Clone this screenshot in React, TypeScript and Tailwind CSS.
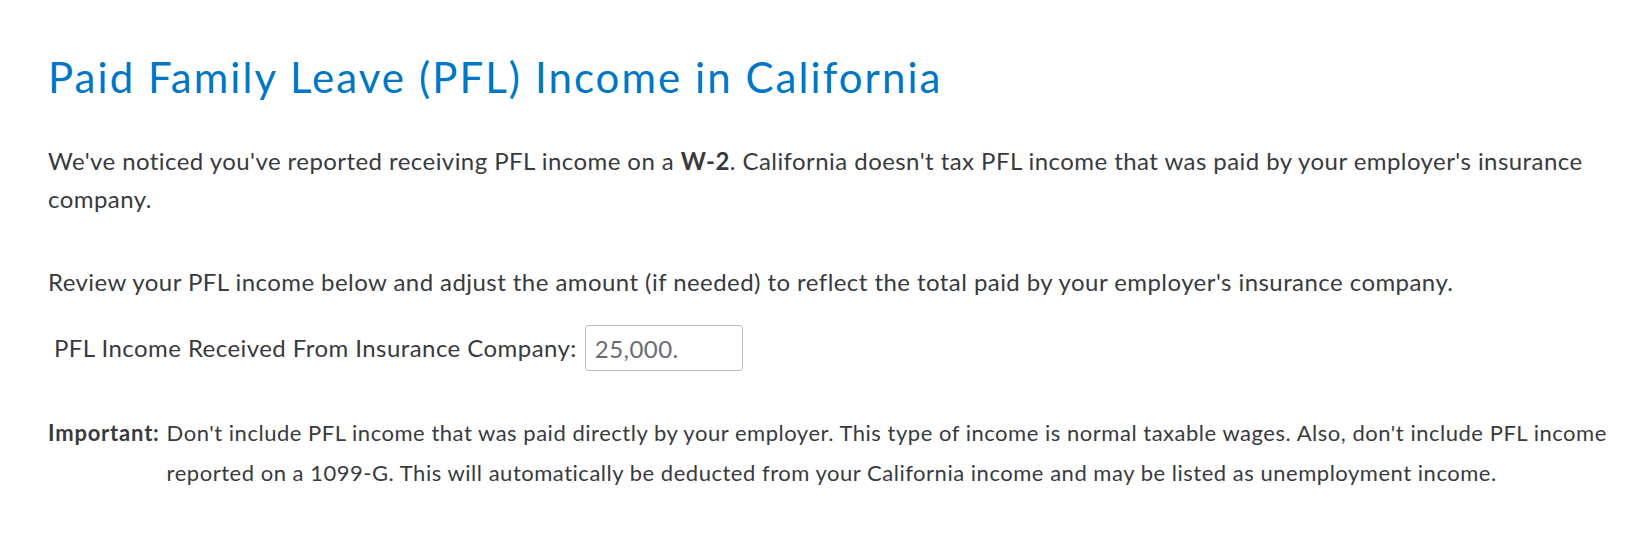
import React from "react";

const App: React.FC = () => {
  return (
    <div className="min-h-screen bg-white pl-[48px] pr-[30px] pt-[47px] text-[#393a3d] font-['Lato',sans-serif]">
      <h1 className="text-[42px] leading-[60px] font-normal tracking-[2.05px] text-[#0077c5]">
        Paid Family Leave (PFL) Income in California
      </h1>
      <p className="mt-[35px] text-[24px] leading-[38px] tracking-[0.44px]">
        We've noticed you've reported receiving PFL income on a <b className="font-bold">W-2</b>.
        California doesn't tax PFL income that was paid by your employer's
        insurance company.
      </p>
      <p className="mt-[45px] text-[24px] leading-[38px] tracking-[0.44px]">
        Review your PFL income below and adjust the amount (if needed) to
        reflect the total paid by your employer's insurance company.
      </p>
      <div className="mt-[24px] flex items-center pl-[6px] text-[24px] tracking-[0.44px]">
        <label htmlFor="pflIncome">PFL Income Received From Insurance Company:</label>
        <input
          id="pflIncome"
          type="text"
          defaultValue="25,000."
          className="ml-[8px] h-[46px] w-[158px] rounded-[3px] border border-[#babec5] px-[9px] text-[24px] tracking-[0.44px] text-[#6b6c72] outline-none"
        />
      </div>
      <div className="mt-[42px] flex gap-[7px] text-[22px] leading-[40px] tracking-[0.52px]">
        <span className="shrink-0 font-bold tracking-[0.8px]">Important:</span>
        <span>
          Don't include PFL income that was paid directly by your employer. This
          type of income is normal taxable wages. Also, don't include PFL income
          reported on a 1099-G. This will automatically be deducted from your
          California income and may be listed as unemployment income.
        </span>
      </div>
    </div>
  );
};

export default App;
